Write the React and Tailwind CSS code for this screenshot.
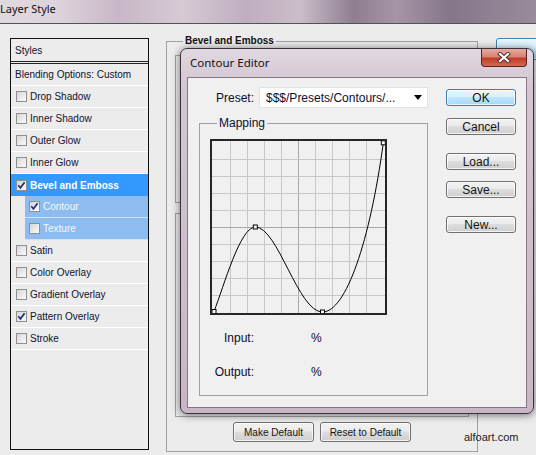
import React from 'react';

const rows = [
  { label: 'Drop Shadow' },
  { label: 'Inner Shadow' },
  { label: 'Outer Glow' },
  { label: 'Inner Glow' },
  { label: 'Bevel and Emboss', checked: true, selected: true },
  { label: 'Contour', checked: true, sub: true },
  { label: 'Texture', sub: true },
  { label: 'Satin' },
  { label: 'Color Overlay' },
  { label: 'Gradient Overlay' },
  { label: 'Pattern Overlay', checked: true },
  { label: 'Stroke' },
];

function Check({ checked }) {
  return (
    <span className="w-[11px] h-[11px] shrink-0 border border-[#8e8f8f] bg-[linear-gradient(135deg,#d6d6d6,#fbfbfb)] flex items-center justify-center">
      {checked && (
        <svg width="9" height="9" viewBox="0 0 9 9">
          <path d="M1.3 4.3 L3.4 6.8 L7.6 1.2" fill="none" stroke="#22307a" strokeWidth="1.7" />
        </svg>
      )}
    </span>
  );
}

function WinButton({ children, className = '', focused = false }) {
  const skin = focused
    ? 'border-[#3c7fb1] bg-[linear-gradient(#eaf6fd_0%,#d9f0fc_45%,#bee6fd_50%,#a7d9f5_100%)]'
    : 'border-[#707070] bg-[linear-gradient(#f2f2f2_0%,#ebebeb_45%,#dddddd_50%,#cfcfcf_100%)]';
  return (
    <button className={`flex items-center justify-center rounded-[3px] border shadow-[inset_0_0_0_1px_rgba(255,255,255,0.75)] text-[#141414] ${skin} ${className}`}>
      {children}
    </button>
  );
}

function StyleRow({ row }) {
  if (row.sub) {
    return (
      <div className="h-[22px] pl-[14px] flex">
        <div className="flex-1 flex items-center gap-[3px] pl-[4px] bg-[#8cbcf0] border-b border-[#cfe3fa] text-[#f5f9ff]">
          <Check checked={row.checked} />
          <span>{row.label}</span>
        </div>
      </div>
    );
  }
  if (row.selected) {
    return (
      <div className="h-[22px] flex items-center gap-[3px] pl-[5px] bg-[#3399ff] text-white font-bold">
        <Check checked={row.checked} />
        <span>{row.label}</span>
      </div>
    );
  }
  return (
    <div className="h-[22px] flex items-center gap-[3px] pl-[5px] border-b border-white text-[#12122e]">
      <Check checked={row.checked} />
      <span>{row.label}</span>
    </div>
  );
}

function ContourGrid() {
  const lines = Array.from({ length: 9 }, (_, i) => 18.5 + 17 * i);
  const pts = [
    [2, 170.5],
    [43.3, 86],
    [110.5, 171],
    [171.3, 1.8],
  ];
  return (
    <svg width="173" height="172" viewBox="0 0 173 172" className="block">
      {lines.map((p, i) => (
        <line key={'v' + i} x1={p} y1="0" x2={p} y2="172" stroke={i === 4 ? '#a9a9a9' : '#c8c8c8'} strokeWidth="1" />
      ))}
      {lines.map((p, i) => (
        <line key={'h' + i} x1="0" y1={p} x2="173" y2={p} stroke={i === 4 ? '#a9a9a9' : '#c8c8c8'} strokeWidth="1" />
      ))}
      <path
        d="M2,170.5 C12,145 28,86 43.3,86 C66,86 86,171 110.5,171 C134,171 158,100 171.3,1.8"
        fill="none"
        stroke="#000"
        strokeWidth="1"
      />
      {pts.map(([x, y], i) => (
        <rect key={i} x={x - 2} y={y - 2} width="4" height="4" fill="#fff" stroke="#000" strokeWidth="1" />
      ))}
    </svg>
  );
}

export default function App() {
  return (
    <div className="relative w-[536px] h-[455px] overflow-hidden bg-[#ececec] font-['Liberation_Sans',Arial,sans-serif]">
      {/* title bar */}
      <div className="h-[24px] border-b border-[#55505a] bg-[linear-gradient(90deg,#e0d8df_0%,#ddd3dc_11%,#c8b7c7_22%,#d6cad5_34%,#bfaebf_46%,#cbbdca_56%,#8e7e8f_66%,#a595a5_74%,#85768a_84%,#9a8b9b_100%)] flex items-start">
        <span className="font-['Noto_Sans',sans-serif] text-[11px] leading-[18px] text-[#101010]">Layer Style</span>
      </div>

      <div className="flex items-start pl-[10px]">
        {/* styles list */}
        <div className="mt-[14px] w-[139px] h-[412px] border border-[#111] text-[10px] shrink-0">
          <div className="h-[25px] flex items-center pl-[4px] border-b-[3px] border-double border-[#222] text-[#12122e]">
            Styles
          </div>
          <div className="h-[22px] flex items-center pl-[4px] border-b border-white text-[#12122e]">
            Blending Options: Custom
          </div>
          {rows.map((row) => (
            <StyleRow key={row.label} row={row} />
          ))}
        </div>

        {/* Bevel and Emboss group behind */}
        <fieldset className="ml-[17px] mt-[11px] w-[312px] shrink-0 border border-[#a0a0a0]">
          <legend className="ml-[16px] px-[2px] text-[10px] leading-[12px] font-bold text-[#111]">Bevel and Emboss</legend>
          <div className="flex flex-col px-[8px] pt-[8px] pb-[9px]">
            <div className="h-[148px] border border-[#a3a3a3]" />
            <div className="mt-[10px] h-[204px] border border-[#a3a3a3]" />
            <div className="mt-[5px] flex justify-center gap-[6px] text-[10px]">
              <WinButton className="w-[81px] h-[20px]">Make Default</WinButton>
              <WinButton className="w-[91px] h-[20px]">Reset to Default</WinButton>
            </div>
          </div>
        </fieldset>

        <div className="ml-[18px] mt-[14px] shrink-0">
          <WinButton focused className="w-[70px] h-[22px]" />
        </div>
      </div>

      {/* Contour Editor dialog */}
      <div className="absolute left-[180px] top-[48px] w-[354px] h-[366px] rounded-[7px] border border-[#3d313e] bg-[linear-gradient(180deg,#e1d8e0_0%,#d3c6d2_10%,#c8b6c7_100%)] shadow-[0_1px_8px_rgba(0,0,0,0.55)] flex flex-col px-[6px] pb-[5px]">
        <div className="h-[28px] flex items-center pl-[3px] pb-[1px]">
          <span className="font-['Noto_Sans',sans-serif] text-[11.5px] text-[#111]">Contour Editor</span>
        </div>
        <div className="absolute left-[300px] top-0 w-[46px] h-[18px] rounded-b-[4px] border border-t-0 border-[#5b241c] bg-[linear-gradient(#e7aa9e_0%,#d88574_45%,#c23b26_55%,#cf6b55_100%)] flex items-center justify-center">
          <svg width="14" height="11" viewBox="0 0 14 11">
            <path d="M3 2 L11 9 M11 2 L3 9" stroke="#4a2a26" strokeWidth="4" strokeLinecap="square" />
            <path d="M3 2 L11 9 M11 2 L3 9" stroke="#ffffff" strokeWidth="2.2" strokeLinecap="square" />
          </svg>
        </div>

        <div className="flex-1 flex border border-[#857786] bg-[#f0f0f0] text-[12px] text-[#0e0e2c]">
          <div className="w-[240px] shrink-0 flex flex-col">
            <div className="mt-[9px] pl-[28px] flex items-center gap-[5px]">
              <span>Preset:</span>
              <div className="w-[169px] h-[21px] bg-white border border-[#e2e2e2] flex items-center justify-between pl-[6px] pr-[5px]">
                <span className="whitespace-nowrap">$$$/Presets/Contours/...</span>
                <svg width="8" height="5" viewBox="0 0 8 5">
                  <path d="M0 0 H8 L4 5 Z" fill="#000" />
                </svg>
              </div>
            </div>

            <fieldset className="mt-[9px] ml-[11px] w-[229px] border border-[#a0a0a0]">
              <legend className="ml-[17px] px-[2px] leading-[12px]">Mapping</legend>
              <div className="pl-[10px] pt-[10px] pb-[16px] flex flex-col">
                <div className="w-[177px] h-[176px] border-2 border-[#262626] bg-[#f0f0f0]">
                  <ContourGrid />
                </div>
                <div className="mt-[16px] flex items-center leading-[14px]">
                  <span className="w-[44px] text-right">Input:</span>
                  <span className="ml-[57px]">%</span>
                </div>
                <div className="mt-[20px] flex items-center leading-[14px]">
                  <span className="w-[44px] text-right">Output:</span>
                  <span className="ml-[57px]">%</span>
                </div>
              </div>
            </fieldset>
          </div>

          <div className="ml-[18px] pt-[11px] flex flex-col">
            <WinButton focused className="w-[70px] h-[17px]">OK</WinButton>
            <WinButton className="mt-[12px] w-[70px] h-[17px]">Cancel</WinButton>
            <WinButton className="mt-[18px] w-[70px] h-[17px]">Load...</WinButton>
            <WinButton className="mt-[11px] w-[70px] h-[17px]">Save...</WinButton>
            <WinButton className="mt-[18px] w-[70px] h-[17px]">New...</WinButton>
          </div>
        </div>
      </div>

      <span className="absolute left-[464px] top-[431px] text-[11px] leading-[13px] text-[#222]">alfoart.com</span>
    </div>
  );
}
